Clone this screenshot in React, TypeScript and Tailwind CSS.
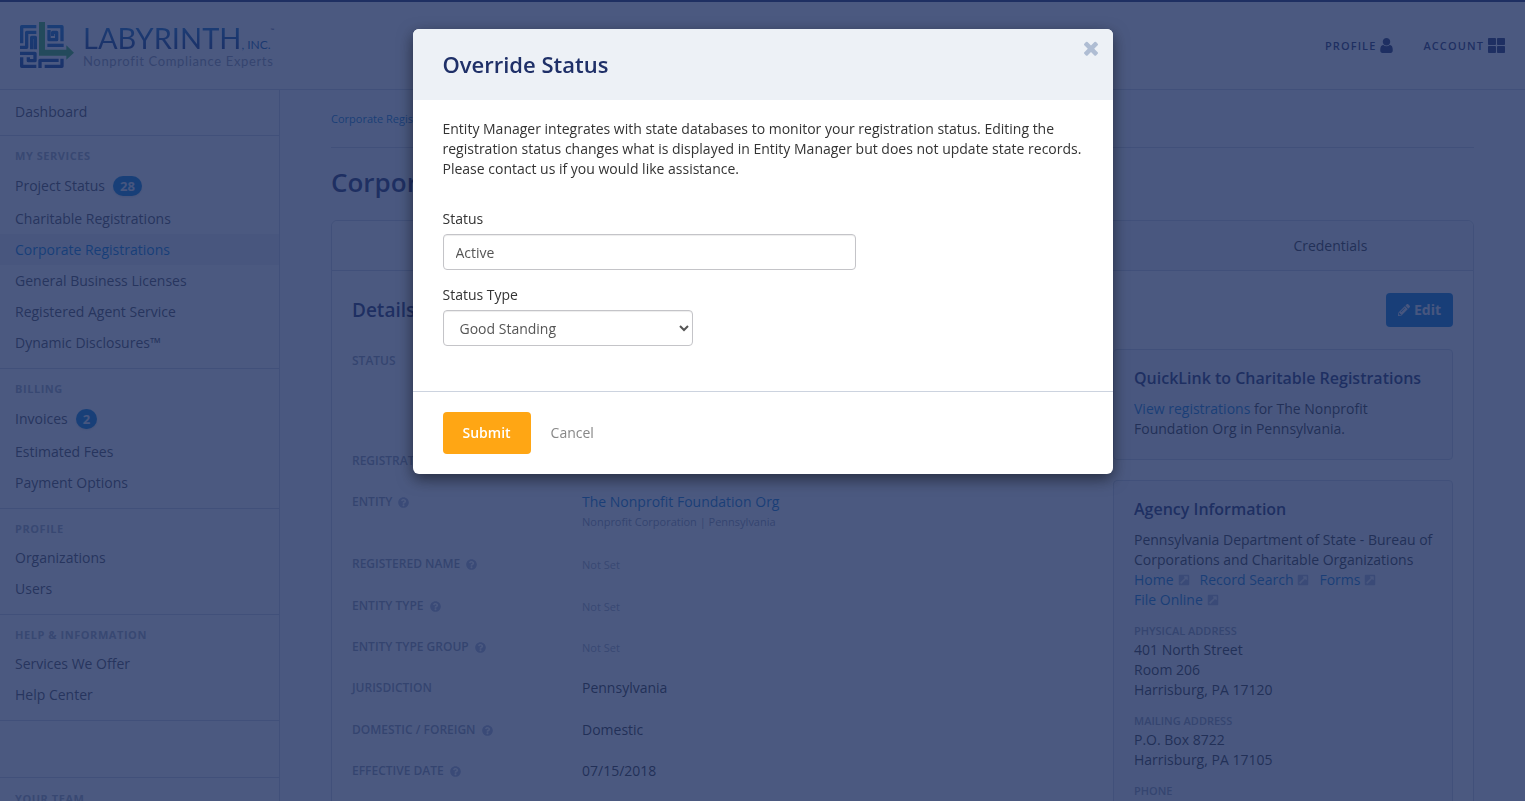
import { useState } from "react"
import type { ReactNode } from "react"
import { FaExternalLinkSquareAlt, FaPencilAlt, FaQuestionCircle, FaThLarge } from "react-icons/fa"

interface NavItem {
  label: string
  badge?: number
  active?: boolean
}

interface NavSection {
  title: string
  items: NavItem[]
}

const sections: NavSection[] = [
  {
    title: "My Services",
    items: [
      { label: "Project Status", badge: 28 },
      { label: "Charitable Registrations" },
      { label: "Corporate Registrations", active: true },
      { label: "General Business Licenses" },
      { label: "Registered Agent Service" },
      { label: "Dynamic Disclosures™" },
    ],
  },
  {
    title: "Billing",
    items: [{ label: "Invoices", badge: 2 }, { label: "Estimated Fees" }, { label: "Payment Options" }],
  },
  { title: "Profile", items: [{ label: "Organizations" }, { label: "Users" }] },
  { title: "Help & Information", items: [{ label: "Services We Offer" }, { label: "Help Center" }] },
]

function LogoMark() {
  return (
    <svg viewBox="0 0 162 141" className="h-[47px] w-[54px] shrink-0" aria-hidden="true">
      <defs>
        <linearGradient id="maze" gradientUnits="userSpaceOnUse" x1="0" y1="0" x2="0" y2="141">
          <stop offset="0" stopColor="#0c78d0" />
          <stop offset="1" stopColor="#0c3c90" />
        </linearGradient>
      </defs>
      <g fill="none" stroke="url(#maze)" strokeWidth="10" strokeLinejoin="round">
        <path d="M5 64V14H49" />
        <path d="M0 76H20V31H49" />
        <path d="M35 82V46H46V82" />
        <path d="M82 14H126V58" />
        <path d="M87 24V53H110V31H98V42" />
        <path d="M82 70H131" />
        <path d="M0 94H45V116H25V106" />
        <path d="M5 106V133H49" />
        <path d="M60 138V115H116" />
        <path d="M74 133H126V110" />
      </g>
      <path d="M57 0H75V83H139V70L162 92L139 113V101H57Z" fill="#3ab54a" />
    </svg>
  )
}

function UserIcon() {
  return (
    <svg viewBox="0 0 1280 1536" fill="currentColor" className="h-[15px] w-[13px]" aria-hidden="true">
      <path d="M1280 1271q0 109-62.500 187t-150.500 78h-854q-88 0-150.500-78t-62.500-187q0-85 8.500-160.500t31.500-152 58.500-131 94-89 134.500-34.500q131 128 313 128t313-128q76 0 134.500 34.500t94 89 58.500 131 31.500 152 8.500 160.500zm-256-887q0 159-112.500 271.500t-271.500 112.500-271.500-112.500-112.500-271.500 112.500-271.500 271.500-112.500 271.500 112.500 112.500 271.500z" />
    </svg>
  )
}

function CloseIcon() {
  return (
    <svg viewBox="110 238 1188 1316" fill="currentColor" className="h-4 w-[14px]" aria-hidden="true">
      <path d="M1298 1322q0 40-28 68l-136 136q-28 28-68 28t-68-28l-294-294-294 294q-28 28-68 28t-68-28l-136-136q-28-28-28-68t28-68l294-294-294-294q-28-28-28-68t28-68l136-136q28-28 68-28t68 28l294 294 294-294q28-28 68-28t68 28l136 136q28 28 28 68t-28 68l-294 294 294 294q28 28 28 68z" />
    </svg>
  )
}

function Header() {
  return (
    <header className="flex h-[90px] items-center justify-between border-t-2 border-b border-t-[#1f3068] border-b-[#ccd3df] bg-white px-5 shadow-sm">
      <a href="#" className="flex items-center gap-[9px] text-[#1f3068]">
        <LogoMark />
        <span className="block font-[Lato,sans-serif]">
          <span className="flex items-baseline">
            <span className="bg-gradient-to-b from-[#0c78d0] to-[#12307c] bg-clip-text text-[29px] leading-[30px] text-transparent">
              LABYRINTH
            </span>
            <span className="text-[12px] leading-none text-[#0c62b0]">, INC.</span>
            <span className="self-start text-[5px] leading-[14px]">™</span>
          </span>
          <span className="block text-[13px] leading-4 tracking-wider text-[#8f96aa]">
            Nonprofit Compliance Experts
          </span>
        </span>
      </a>
      <nav className="flex items-center gap-[30px] text-[11px] font-semibold tracking-widest text-[#1f3068]">
        <a href="#" className="flex items-center gap-1">
          PROFILE
          <UserIcon />
        </a>
        <a href="#" className="flex items-center gap-1">
          ACCOUNT
          <FaThLarge className="size-[17px]" />
        </a>
      </nav>
    </header>
  )
}

function SidebarTitle({ children }: { children: ReactNode }) {
  return (
    <h2 className="mb-1 px-[15px] text-[11px] leading-[18px] font-bold tracking-wider text-[#a0a8b8] uppercase">
      {children}
    </h2>
  )
}

function Sidebar() {
  return (
    <aside className="w-[280px] shrink-0 border-r border-[#ccd3df] bg-white text-[#4c4c54]">
      <div className="border-b border-[#ccd3df] pt-[6px] pb-2">
        <a href="#" className="block px-[15px] leading-[31px]">
          Dashboard
        </a>
      </div>
      {sections.map((section) => (
        <div key={section.title} className="border-b border-[#ccd3df] pt-[11px] pb-[10px]">
          <SidebarTitle>{section.title}</SidebarTitle>
          <ul>
            {section.items.map((item) => (
              <li key={item.label} className={item.active ? "bg-[#eef1f6] text-[#007bd8]" : ""}>
                <a href="#" className={`flex items-center px-[15px] ${item.badge ? "h-[34px] gap-2" : "h-[31px]"}`}>
                  {item.label}
                  {item.badge && (
                    <span className="rounded-full bg-[#007fd8] px-[7px] text-[13px] leading-5 font-bold text-[#e8eef8] shadow">
                      {item.badge}
                    </span>
                  )}
                </a>
              </li>
            ))}
          </ul>
        </div>
      ))}
      <div className="mt-14 border-t border-[#ccd3df] pt-3">
        <SidebarTitle>Your Team</SidebarTitle>
      </div>
    </aside>
  )
}

function DetailRow({
  label,
  help,
  className = "h-[41px]",
  children,
}: {
  label: string
  help?: boolean
  className?: string
  children?: ReactNode
}) {
  return (
    <div className={`flex ${className}`}>
      <dt className="flex h-5 w-[230px] shrink-0 items-center gap-[6px] text-[12px] font-semibold text-[#8e96ab] uppercase">
        {label}
        {help && <FaQuestionCircle className="size-[11px] text-[#a9b4d0]" />}
      </dt>
      <dd>{children}</dd>
    </div>
  )
}

function NotSet() {
  return <span className="text-[11px] text-[#a0a8b8]">Not Set</span>
}

function AgencyLink({ children }: { children: ReactNode }) {
  return (
    <a href="#" className="mr-[10px] inline-flex items-center gap-1 text-[#0b7bd0]">
      {children}
      <FaExternalLinkSquareAlt className="size-[12px] text-[#a9b4d0]" />
    </a>
  )
}

function InfoCard({ title, children }: { title: string; children: ReactNode }) {
  return (
    <section className="rounded border border-[#ccd3df] bg-[#f3f5fa] pt-[18px] pr-2 pb-5 pl-5">
      <h3 className="mb-[11px] text-[16px] leading-5 font-semibold text-[#1f3068]">{title}</h3>
      {children}
    </section>
  )
}

function AddressTitle({ children }: { children: ReactNode }) {
  return <h4 className="mt-3 text-[11px] leading-[18px] font-semibold text-[#9199ad] uppercase">{children}</h4>
}

function Details() {
  return (
    <main className="min-w-0 flex-1 bg-[#fafbfd] px-[51px] pt-5">
      <nav className="border-b border-[#ccd3df] pb-[19px] text-[11px] leading-[18px] text-[#0b7bd0]">
        <a href="#">Corporate Registrations</a>
      </nav>
      <h1 className="mt-4 mb-5 text-[26px] leading-9 font-semibold text-[#1f3068]">Corporate Registration</h1>
      <div className="rounded-md border border-[#ccd3df] bg-white">
        <div className="grid grid-cols-4 rounded-t-md border-b border-[#ccd3df] bg-[#f3f5fa] text-center leading-[49px]">
          <span className="rounded-tl-md bg-white" />
          <span />
          <span />
          <a href="#">Credentials</a>
        </div>
        <div className="px-5 pt-[22px]">
          <div className="mb-[22px] flex items-center justify-between">
            <h2 className="text-[19px] font-semibold text-[#1f3068]">Details</h2>
            <button
              type="button"
              className="flex h-[34px] items-center gap-1 rounded bg-[#007bd8] px-3 font-bold text-[#e8eef8]"
            >
              <FaPencilAlt className="size-3" />
              Edit
            </button>
          </div>
          <div className="flex items-start">
            <dl className="flex-1 pt-[2px]">
              <DetailRow label="Status" className="h-[100px]" />
              <DetailRow label="Registration" className="h-[41px]" />
              <DetailRow label="Entity" help className="h-[62px]">
                <a href="#" className="text-[#0b7bd0]">
                  The Nonprofit Foundation Org
                </a>
                <div className="text-[11px] text-[#8e96ab]">Nonprofit Corporation | Pennsylvania</div>
              </DetailRow>
              <DetailRow label="Registered Name" help className="h-[42px]">
                <NotSet />
              </DetailRow>
              <DetailRow label="Entity Type" help>
                <NotSet />
              </DetailRow>
              <DetailRow label="Entity Type Group" help>
                <NotSet />
              </DetailRow>
              <DetailRow label="Jurisdiction" className="h-[42px]">
                Pennsylvania
              </DetailRow>
              <DetailRow label="Domestic / Foreign" help>
                Domestic
              </DetailRow>
              <DetailRow label="Effective Date" help>
                07/15/2018
              </DetailRow>
            </dl>
            <div className="flex w-[340px] shrink-0 flex-col gap-5">
              <InfoCard title="QuickLink to Charitable Registrations">
                <p className="pr-10">
                  <a href="#" className="text-[#0b7bd0]">
                    View registrations
                  </a>{" "}
                  for The Nonprofit Foundation Org in Pennsylvania.
                </p>
              </InfoCard>
              <InfoCard title="Agency Information">
                <p>Pennsylvania Department of State - Bureau of Corporations and Charitable Organizations</p>
                <div className="pr-3">
                  <AgencyLink>Home</AgencyLink>
                  <AgencyLink>Record Search</AgencyLink>
                  <AgencyLink>Forms</AgencyLink>
                  <AgencyLink>File Online</AgencyLink>
                </div>
                <AddressTitle>Physical Address</AddressTitle>
                <address className="not-italic">
                  401 North Street
                  <br />
                  Room 206
                  <br />
                  Harrisburg, PA 17120
                </address>
                <AddressTitle>Mailing Address</AddressTitle>
                <address className="not-italic">
                  P.O. Box 8722
                  <br />
                  Harrisburg, PA 17105
                </address>
                <AddressTitle>Phone</AddressTitle>
              </InfoCard>
            </div>
          </div>
        </div>
      </div>
    </main>
  )
}

function OverrideStatusModal({ onClose }: { onClose: () => void }) {
  const [status, setStatus] = useState("Active")
  const [statusType, setStatusType] = useState("Good Standing")

  return (
    <div className="fixed inset-0 z-20 bg-[#1e3060]/80 px-4 pt-[29px]">
      <form
        role="dialog"
        aria-labelledby="override-title"
        onSubmit={(e) => {
          e.preventDefault()
          onClose()
        }}
        className="mx-auto max-w-[700px] overflow-hidden rounded-md bg-white shadow-[0_5px_15px_rgba(0,0,0,0.5)]"
      >
        <div className="flex items-start justify-between bg-[#edf1f6] pr-[15px] pb-px pl-[30px]">
          <h2 id="override-title" className="text-[22px] leading-[70px] font-semibold text-[#1f3068]">
            Override Status
          </h2>
          <button type="button" aria-label="Close" onClick={onClose} className="mt-[11px] text-[#afbdd3]">
            <CloseIcon />
          </button>
        </div>
        <div className="border-b border-[#ccd3df] px-[30px] pt-[19px] pb-[45px]">
          <p>
            Entity Manager integrates with state databases to monitor your registration status. Editing the registration
            status changes what is displayed in Entity Manager but does not update state records. Please contact us if
            you would like assistance.
          </p>
          <label htmlFor="status" className="mt-[30px] mb-[5px] block">
            Status
          </label>
          <input
            id="status"
            type="text"
            value={status}
            onChange={(e) => setStatus(e.target.value)}
            className="block h-9 w-full max-w-[413px] rounded border border-[#c4c4c8] px-3 text-[#555] shadow-[inset_0_1px_1px_rgba(0,0,0,0.075)]"
          />
          <label htmlFor="status-type" className="mt-[15px] mb-[5px] block">
            Status Type
          </label>
          <select
            id="status-type"
            value={statusType}
            onChange={(e) => setStatusType(e.target.value)}
            className="block h-9 w-[250px] rounded border border-[#c4c4c8] bg-white px-3 text-[#555] shadow-[inset_0_1px_1px_rgba(0,0,0,0.075)]"
          >
            <option>Good Standing</option>
            <option>Not in Good Standing</option>
          </select>
        </div>
        <div className="flex items-center gap-5 px-[30px] py-5">
          <button type="submit" className="h-[42px] rounded bg-[#ffa614] px-5 font-semibold text-white">
            Submit
          </button>
          <button type="button" onClick={onClose} className="text-[#888]">
            Cancel
          </button>
        </div>
      </form>
    </div>
  )
}

export default function App() {
  const [modalOpen, setModalOpen] = useState(true)

  return (
    <div className="h-screen overflow-hidden font-['Open_Sans','Noto_Sans',sans-serif] text-[14px] leading-5 text-[#333]">
      <Header />
      <div className="flex min-h-full">
        <Sidebar />
        <Details />
      </div>
      {modalOpen && <OverrideStatusModal onClose={() => setModalOpen(false)} />}
    </div>
  )
}
